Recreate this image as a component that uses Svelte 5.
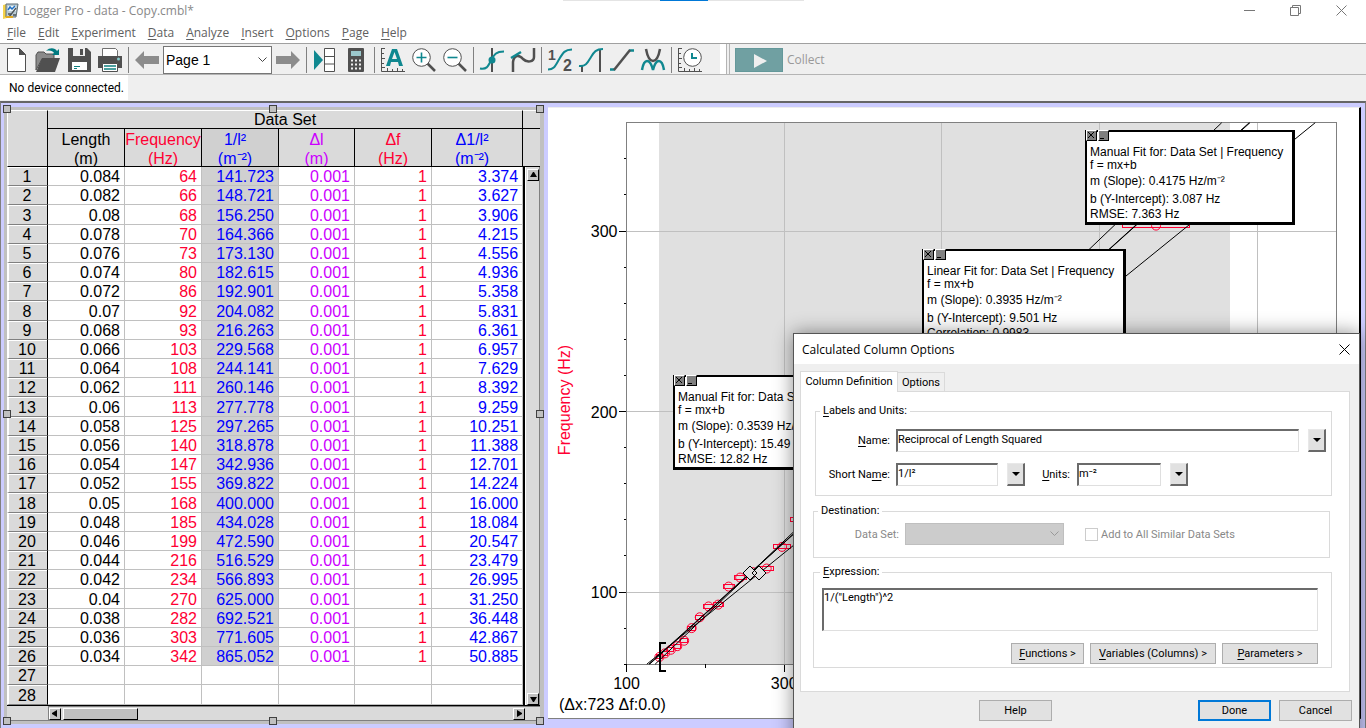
<script>
    const menus = ['File', 'Edit', 'Experiment', 'Data', 'Analyze', 'Insert', 'Options', 'Page', 'Help'];

    const columns = [
        { name: 'Length', unit: '(m)', kind: 'length' },
        { name: 'Frequency', unit: '(Hz)', kind: 'freq' },
        { name: '1/l²', unit: '(m⁻²)', kind: 'recip' },
        { name: 'Δl', unit: '(m)', kind: 'dl' },
        { name: 'Δf', unit: '(Hz)', kind: 'df' },
        { name: 'Δ1/l²', unit: '(m⁻²)', kind: 'drecip' }
    ];

    // length, frequency, 1/l², error of 1/l²
    const data = [
        ['0.084', 64, '141.723', '3.374'],
        ['0.082', 66, '148.721', '3.627'],
        ['0.08', 68, '156.250', '3.906'],
        ['0.078', 70, '164.366', '4.215'],
        ['0.076', 73, '173.130', '4.556'],
        ['0.074', 80, '182.615', '4.936'],
        ['0.072', 86, '192.901', '5.358'],
        ['0.07', 92, '204.082', '5.831'],
        ['0.068', 93, '216.263', '6.361'],
        ['0.066', 103, '229.568', '6.957'],
        ['0.064', 108, '244.141', '7.629'],
        ['0.062', 111, '260.146', '8.392'],
        ['0.06', 113, '277.778', '9.259'],
        ['0.058', 125, '297.265', '10.251'],
        ['0.056', 140, '318.878', '11.388'],
        ['0.054', 147, '342.936', '12.701'],
        ['0.052', 155, '369.822', '14.224'],
        ['0.05', 168, '400.000', '16.000'],
        ['0.048', 185, '434.028', '18.084'],
        ['0.046', 199, '472.590', '20.547'],
        ['0.044', 216, '516.529', '23.479'],
        ['0.042', 234, '566.893', '26.995'],
        ['0.04', 270, '625.000', '31.250'],
        ['0.038', 282, '692.521', '36.448'],
        ['0.036', 303, '771.605', '42.867'],
        ['0.034', 342, '865.052', '50.885']
    ];
    const rows = data.map(([l, f, r, dr]) => [l, f, r, '0.001', '1', dr]);
    while (rows.length < 28) rows.push(['', '', '', '', '', '']);

    // plot scales
    const px = (x) => 78.5 + (x - 100) * 0.7885;
    const py = (y) => 484 - (y - 100) * 1.805;
    const xGrid = [300, 500, 700, 900];
    const yGrid = [100, 200, 300];
    const yTicks = [60, 80, 120, 140, 160, 180, 220, 240, 260, 280, 320, 340];

    const points = data.map(([l, f, r, dr]) => ({
        x: px(+r),
        y: py(f),
        w: dr * 0.7885
    }));

    const lines = [
        [0.4175, 3.087],
        [0.3935, 9.501],
        [0.3945, 9],
        [0.3539, 15.49]
    ].map(([m, b]) => ({
        x1: px((60 - b) / m),
        y1: py(60),
        x2: px((360 - b) / m),
        y2: py(360)
    }));

    const fits = [
        { id: 'low', title: 'Manual Fit for: Data Set | Frequency', m: '0.3539', b: '15.49', last: 'RMSE: 12.82 Hz' },
        { id: 'mid', title: 'Linear Fit for: Data Set | Frequency', m: '0.3935', b: '9.501', last: 'Correlation: 0.9983' },
        { id: 'high', title: 'Manual Fit for: Data Set | Frequency', m: '0.4175', b: '3.087', last: 'RMSE: 7.363 Hz' }
    ];

    let name = 'Reciprocal of Length Squared';
    let shortName = '1/l²';
    let units = 'm⁻²';
    let expression = '1/("Length")^2';
</script>

<div class="app">
    <header class="titlebar">
        <svg class="logo" width="16" height="16" viewBox="0 0 16 16">
            <path d="M0 2l4-1v14l-4 1z" fill="#f5d34b" />
            <path d="M3 1h12l-2 13H3z" fill="#b9cbd3" stroke="#5c6b73" />
            <path d="M5 3h8v5H5z" fill="#eef6fb" />
            <path d="M5 7l2-3 2 2 3-3" fill="none" stroke="#1f6fc2" stroke-width="1.5" />
            <path d="M6 14l7-9M5 11h4M10 12h3" stroke="#4d5459" stroke-width="1.3" />
            <path d="M3 14h7" stroke="#e1a922" stroke-width="2" />
        </svg>
        <span>Logger Pro - data - Copy.cmbl*</span>
        <div class="notch"><i></i></div>
        <div class="controls">
            <button aria-label="Minimize"><svg width="11" height="11"><path d="M0 5.5h11" /></svg></button>
            <button aria-label="Restore"><svg width="11" height="11"><path d="M.5 2.5h8v8h-8zM2.5 2.5v-2h8v8h-2" /></svg></button>
            <button aria-label="Close"><svg width="11" height="11"><path d="M.5.5l10 10M10.500.5l-10 10" /></svg></button>
        </div>
    </header>

    <nav class="menubar">
        {#each menus as menu}
            <button><u>{menu[0]}</u>{menu.slice(1)}</button>
        {/each}
    </nav>

    <div class="toolbar">
        <div class="tools">
            <button aria-label="New"><svg viewBox="0 0 24 24"><path d="M2.500.5h12l6 6v17h-18z" fill="#fff" stroke="#505050" /><path d="M14 0v7h7z" fill="#505050" /></svg></button>
            <button aria-label="Open"><svg viewBox="0 0 24 24"><path d="M0 22V7l2-3h6l2 2h8v5H6z" fill="#8a8a8a" stroke="#505050" /><path d="M6 10h18l-5 14H0z" fill="#505050" /><path d="M10 3c4-4 9-3 11 0l2-2v6h-7l2-2c-1-2-4-3-8-2z" fill="#007a80" /></svg></button>
            <button aria-label="Save"><svg viewBox="0 0 24 24"><path d="M1 0h19l4 4v20H1z" fill="#505050" /><path d="M6 0h12v8H6z" fill="#efefef" /><path d="M13 1h3v6h-3z" fill="#505050" /><path d="M5 14h15v8H5z" fill="#fff" /><path d="M7 18.500h6M7 20.500h3" stroke="#108080" /></svg></button>
            <button aria-label="Print"><svg viewBox="0 0 24 24"><path d="M4.500.5h13l2 2v6h-15z" fill="#fff" stroke="#707070" /><path d="M0 8h24v12H0z" fill="#505050" /><circle cx="20.500" cy="11" r="1.500" fill="#8cc" /><path d="M4.500 15.500h15v8h-15z" fill="#fff" stroke="#505050" /><path d="M6 18h12M6 21h12" stroke="#108080" stroke-width="1.500" /></svg></button>
            <i class="sep"></i>
            <button aria-label="Previous page"><svg viewBox="0 0 24 24"><path d="M0 12l9-9v5h15v8H9v5z" fill="#8c8c8c" /></svg></button>
            <select aria-label="Page"><option>Page 1</option></select>
            <button aria-label="Next page"><svg viewBox="0 0 24 24"><path d="M24 12l-9-9v5H0v8h15v5z" fill="#8c8c8c" /></svg></button>
            <i class="sep"></i>
            <button aria-label="Data browser"><svg viewBox="0 0 24 24"><path d="M1 2l9 10-9 10z" fill="#108890" /><path d="M11.500.5h10v23h-10zM11 8.500h11M11 16h11" fill="#fff" stroke="#505050" /></svg></button>
            <button aria-label="Calculator"><svg viewBox="0 0 24 24"><rect x="4" width="16" height="24" rx="1" fill="#505050" /><path d="M7 3h10v5H7z" fill="#9cc8cc" /><path d="M7 12.500h11M7 16.500h11M7 20.500h11" stroke="#efefef" stroke-width="2" stroke-dasharray="2 2" /></svg></button>
            <i class="sep"></i>
            <button aria-label="Autoscale"><svg viewBox="0 0 24 24"><path d="M.5 0v23.500H24M0 .5h4M0 5.500h3M0 10.500h4M0 15.500h3M0 19.500h4M6.500 23v-3M11.500 23v-2M16.500 23v-3M21.500 23v-2" fill="none" stroke="#505050" /><path d="M5 18L11 1h5l6 17h-4l-1-4h-7l-1 4zM11 11h5l-2.500-7z" fill="#108890" fill-rule="evenodd" /></svg></button>
            <button aria-label="Zoom in"><svg viewBox="0 0 24 24"><path d="M15 15l8 8" stroke="#505050" stroke-width="2.500" /><circle cx="9.500" cy="9.500" r="8.800" fill="#fff" stroke="#505050" /><path d="M4.500 9.500h10M9.500 4.500v10" stroke="#108890" stroke-width="1.600" /></svg></button>
            <button aria-label="Zoom out"><svg viewBox="0 0 24 24"><path d="M15 15l8 8" stroke="#505050" stroke-width="2.500" /><circle cx="9.500" cy="9.500" r="8.800" fill="#fff" stroke="#505050" /><path d="M4.500 9.500h10" stroke="#108890" stroke-width="1.600" /></svg></button>
            <i class="sep"></i>
            <button aria-label="Examine"><svg viewBox="0 0 24 24"><path d="M12 0v24" stroke="#505050" stroke-width="2" /><path d="M0 20.500c7 1 8-2 11-8s5-9 13-9" fill="none" stroke="#108890" stroke-width="2" /><circle cx="12" cy="12" r="3.500" fill="#108890" /></svg></button>
            <button aria-label="Tangent"><svg viewBox="0 0 24 24"><path d="M2 24V14c1-8 7-7 10-3 4 4 11 3 11-2V0" fill="none" stroke="#505050" stroke-width="2.500" /><path d="M0 10l10-6" stroke="#108890" stroke-width="2.500" /></svg></button>
            <i class="sep"></i>
            <button aria-label="Statistics"><svg viewBox="0 0 24 24"><path d="M0 21.500c6 0 7-3 11-10s6-10 13-10" fill="none" stroke="#108890" stroke-width="2" /><text x="0" y="12" font-size="14">1</text><text x="15" y="23" font-size="16">2</text></svg></button>
            <button aria-label="Integral"><svg viewBox="0 0 24 24"><path d="M3 18v6M21 1v23" stroke="#505050" stroke-width="2" /><path d="M0 18c7 1 9-4 12-9s5-8 12-8" fill="none" stroke="#108890" stroke-width="2" /></svg></button>
            <button aria-label="Linear fit"><svg viewBox="0 0 24 24"><path d="M0 21.500h5M19 2.500h5" stroke="#108890" stroke-width="2.500" /><path d="M4 22L20 2" stroke="#505050" stroke-width="2.500" /></svg></button>
            <button aria-label="Curve fit"><svg viewBox="0 0 24 24"><path d="M1 22c2-12 8-12 11 0 3-12 9-12 11 0" fill="none" stroke="#108890" stroke-width="2.500" /><path d="M5 1c3 16 11 16 14 0" fill="none" stroke="#505050" stroke-width="2.500" /></svg></button>
            <i class="sep"></i>
            <button aria-label="Data collection"><svg viewBox="0 0 24 24"><path d="M.5 0v23.500H24M0 .5h4M0 5.500h3M0 10.500h4M0 15.500h3M0 19.500h4M6.500 23v-3M11.500 23v-2M16.500 23v-3M21.500 23v-2" fill="none" stroke="#505050" /><circle cx="14.500" cy="9.500" r="8.800" fill="#fff" stroke="#505050" /><path d="M14 5v5h5" fill="none" stroke="#108890" stroke-width="2" /></svg></button>
        </div>
        <button class="collect" disabled>
            <svg width="48" height="24"><path d="M18 5l13 7-13 7z" fill="#efefef" /></svg>
            Collect
        </button>
    </div>

    <div class="status"><span>No device connected.</span></div>

    <main class="workspace">
        <section class="table-pane">
            <div class="table-top">
                <table>
                    <colgroup>
                        <col class="c-num" />
                        {#each columns as col}<col class="c-{col.kind}" />{/each}
                    </colgroup>
                    <thead>
                        <tr class="set"><th rowspan="2"></th><th colspan="6">Data Set</th></tr>
                        <tr class="names">
                            {#each columns as col}
                                <th class={col.kind}><span>{col.name}<br />{col.unit}</span></th>
                            {/each}
                        </tr>
                    </thead>
                    <tbody>
                        {#each rows as row, i}
                            <tr>
                                <th>{i + 1}</th>
                                {#each row as cell, j}
                                    <td class={columns[j].kind} class:filled={cell !== ''}>{cell}</td>
                                {/each}
                            </tr>
                        {/each}
                    </tbody>
                </table>
                <div class="vscroll">
                    <div class="corner"></div>
                    <div class="track">
                        <button aria-label="Scroll up"><svg width="7" height="6"><path d="M3 0h1l3 5H0z" /></svg></button>
                        <button aria-label="Scroll down"><svg width="7" height="6"><path d="M0 1h7L4 6H3z" /></svg></button>
                    </div>
                </div>
            </div>
            <div class="hscroll">
                <div class="track">
                    <button aria-label="Scroll left"><svg width="6" height="7"><path d="M5 0v7L0 4V3z" /></svg></button>
                    <div class="thumb"></div>
                    <button aria-label="Scroll right"><svg width="6" height="7"><path d="M1 0v7l5-3V3z" /></svg></button>
                </div>
            </div>
            <i class="handle t l"></i><i class="handle t c"></i><i class="handle t r"></i>
            <i class="handle m l"></i><i class="handle m r"></i>
            <i class="handle b l"></i><i class="handle b c"></i><i class="handle b r"></i>
        </section>

        <section class="graph-pane">
            <svg class="plot" width="100%" height="610" shape-rendering="crispEdges">
                <rect x={px(141.7)} y={py(360)} width={px(865) - px(141.7)} height={py(60) - py(360)} fill="#e0e0e0" />
                {#each xGrid as x}
                    <line x1={px(x)} x2={px(x)} y1={py(360)} y2={py(60)} stroke="#c0c0c0" />
                    <line x1={px(x)} x2={px(x)} y1={py(60)} y2={py(60) + 8} stroke="#000" />
                {/each}
                {#each yGrid as y}
                    <line x1={px(100)} x2={px(1000)} y1={py(y)} y2={py(y)} stroke="#c0c0c0" />
                    <line x1={px(100) - 8} x2={px(100)} y1={py(y)} y2={py(y)} stroke="#000" />
                    <text x={px(100) - 9} y={py(y) + 6} text-anchor="end">{y}</text>
                {/each}
                {#each yTicks as y}
                    <line x1={px(100) - 3} x2={px(100)} y1={py(y)} y2={py(y)} stroke="#000" />
                {/each}
                <rect x={px(100)} y={py(360)} width={px(1000) - px(100)} height={py(60) - py(360)} fill="none" stroke="#808080" />
                <line x1={px(100)} x2={px(100)} y1={py(60)} y2={py(60) + 8} stroke="#000" />
                <line x1={px(200)} x2={px(200)} y1={py(60)} y2={py(60) + 4} stroke="#000" />
                <text x={px(100)} y="581" text-anchor="middle">100</text>
                <text x={px(300)} y="581" text-anchor="middle">300</text>
                <text x="11" y="602">(Δx:723 Δf:0.0)</text>
                <text class="axis" x="-292" y="22" text-anchor="middle" transform="rotate(-90)">Frequency (Hz)</text>
                {#each points as p}
                    <rect x={p.x - p.w} y={p.y - 2} width={2 * p.w} height="4" fill="none" stroke="#f03" />
                    <circle cx={p.x} cy={p.y} r="4.500" fill="none" stroke="#f03" shape-rendering="auto" />
                {/each}
                {#each lines as l}
                    <line {...l} stroke="#000" shape-rendering="auto" />
                {/each}
                <path d="M195 465l7-7 7 7-7 7zM204 465l7-7 7 7-7 7z" fill="#e0e0e0" stroke="#000" shape-rendering="auto" />
                <path d="M118 535h-6v28h6" fill="none" stroke="#000" stroke-width="2" />
            </svg>

            {#each fits as fit}
                <div class="fit {fit.id}">
                    <div class="fit-buttons">
                        <button aria-label="Close fit"><svg width="9" height="9"><path d="M1 1l6 6M7 1l-6 6" /></svg></button>
                        <button aria-label="Collapse fit"><svg width="9" height="9"><path d="M1 7.500h4" /></svg></button>
                    </div>
                    <p>{fit.title}</p>
                    <p>f = mx+b</p>
                    <p class="tall">m (Slope): {fit.m} Hz/m⁻²</p>
                    <p class="tall">b (Y-Intercept): {fit.b} Hz</p>
                    <p>{fit.last}</p>
                </div>
            {/each}
        </section>
    </main>

    <div class="dialog" role="dialog" aria-labelledby="dialog-title">
        <div class="dialog-title">
            <span id="dialog-title">Calculated Column Options</span>
            <button aria-label="Close dialog"><svg width="11" height="11"><path d="M.5.5l10 10M10.500.5l-10 10" /></svg></button>
        </div>
        <div class="tabs" role="tablist">
            <button role="tab" aria-selected="true" class="active">Column Definition</button>
            <button role="tab" aria-selected="false">Options</button>
        </div>
        <div class="panel">
            <fieldset class="labels">
                <legend><u>L</u>abels and Units:</legend>
                <div class="row">
                    <label class="lead" for="name"><u>N</u>ame:</label>
                    <input id="name" class="wide" bind:value={name} />
                    <button class="drop" aria-label="Name choices"><svg width="8" height="4"><path d="M0 0h8L4 4z" /></svg></button>
                </div>
                <div class="row">
                    <label class="lead" for="short">Short Na<u>m</u>e:</label>
                    <input id="short" class="short" bind:value={shortName} />
                    <button class="drop" aria-label="Short name symbols"><svg width="8" height="4"><path d="M0 0h8L4 4z" /></svg></button>
                    <label class="units" for="units"><u>U</u>nits:</label>
                    <input id="units" class="unit" bind:value={units} />
                    <button class="drop" aria-label="Unit symbols"><svg width="8" height="4"><path d="M0 0h8L4 4z" /></svg></button>
                </div>
            </fieldset>
            <fieldset class="destination" disabled>
                <legend>Destination:</legend>
                <div class="row">
                    <label class="lead" for="set">Data Set:</label>
                    <select id="set"></select>
                    <input id="all" type="checkbox" />
                    <label for="all">Add to All Similar Data Sets</label>
                </div>
            </fieldset>
            <fieldset class="expression">
                <legend><label for="expr"><u>E</u>xpression:</label></legend>
                <textarea id="expr" bind:value={expression}></textarea>
                <div class="insert">
                    <button class="push"><u>F</u>unctions &gt;</button>
                    <button class="push variables"><u>V</u>ariables (Columns) &gt;</button>
                    <button class="push parameters"><u>P</u>arameters &gt;</button>
                </div>
            </fieldset>
        </div>
        <div class="actions">
            <button class="push help">Help</button>
            <button class="push done">Done</button>
            <button class="push">Cancel</button>
        </div>
    </div>
</div>

<style>
    :global(body) {
        overflow: hidden;
    }

    .app {
        position: relative;
        display: flex;
        flex-direction: column;
        height: 100vh;
        overflow: hidden;
        background: #fff;
        font-family: "Open Sans", "Noto Sans", sans-serif;
        font-size: 12px;
        color: #000;
    }

    .app *,
    .app *::before {
        box-sizing: border-box;
    }

    button {
        padding: 0;
        border: 0;
        background: none;
        font: inherit;
        color: inherit;
    }

    svg {
        display: block;
    }

    u {
        text-underline-offset: 2px;
    }

    /* title and menus */
    .titlebar {
        position: relative;
        display: flex;
        align-items: center;
        gap: 4px;
        height: 22px;
        padding-left: 3px;
        color: #888;
    }

    .notch {
        position: absolute;
        top: 0;
        left: 50%;
        width: 241px;
        height: 1px;
        margin-left: -120px;
        background: #e4e4e4;
    }

    .notch i {
        display: block;
        width: 48px;
        height: 1px;
        margin: 0 auto;
        background: #0078d7;
    }

    .controls {
        display: flex;
        gap: 35px;
        margin-left: auto;
        padding-right: 19px;
    }

    .controls path {
        fill: none;
        stroke: #777;
    }

    .menubar {
        display: flex;
        gap: 12px;
        height: 22px;
        padding-left: 7px;
        border-bottom: 1px solid #a0a0a0;
        color: #606060;
    }

    /* toolbar */
    .toolbar {
        display: flex;
        height: 32px;
        border-bottom: 1px solid #b4b4b4;
        background: #efefef;
    }

    .tools {
        display: flex;
        align-items: center;
        padding: 2px 18px 0 5px;
        border-right: 6px solid #fff;
    }

    .tools button {
        width: 24px;
        height: 24px;
        margin-right: 7px;
    }

    .tools button:last-child {
        margin-right: 0;
    }

    .tools svg {
        width: 24px;
        height: 24px;
        overflow: visible;
    }

    .tools text {
        font-family: "Liberation Sans", Arial, sans-serif;
        font-weight: 700;
        fill: #505050;
    }

    .sep {
        width: 1px;
        height: 26px;
        margin: 0 6px 0 -1px;
        background: #808080;
    }

    .tools select {
        width: 109px;
        height: 28px;
        margin: 0 4px 0 -3px;
        padding: 0 2px;
        border: 1px solid #767676;
        border-radius: 0;
        appearance: none;
        background: #fff url("data:image/svg+xml,%3Csvg xmlns='http://www.w3.org/2000/svg' width='9' height='6'%3E%3Cpath d='M.5.5l4 4 4-4' fill='none' stroke='%23444'/%3E%3C/svg%3E") no-repeat right 4px center;
        font: 14px "Liberation Sans", Arial, sans-serif;
        color: #000;
    }

    .collect {
        display: flex;
        align-items: center;
        gap: 4px;
        padding: 2px 0 0 5px;
        border-left: 4px double #b4b4b4;
        color: #999;
    }

    .collect svg {
        border: 1px solid #64989a;
        background: #70a0a2;
    }

    .status {
        height: 26px;
        background: #efefef;
    }

    .status span {
        display: inline-block;
        width: 128px;
        height: 25px;
        padding-left: 9px;
        background: #fff;
        font-family: Roboto, sans-serif;
        line-height: 26px;
        white-space: nowrap;
    }

    /* workspace */
    .workspace {
        display: flex;
        flex: 1;
        gap: 4px;
        padding: 4px 4px 4px 3px;
        border: 1px solid #808080;
        border-top: 2px solid #666;
        border-bottom: 0;
        background: #ccf;
        font-family: "Liberation Sans", Arial, sans-serif;
    }

    .table-pane {
        position: relative;
        align-self: flex-start;
        padding: 3px 4px 3px 3px;
        background: #c0c0c0;
        font-size: 16px;
    }

    .table-top {
        display: flex;
        border-bottom: 1px solid #000;
    }

    table {
        width: 516px;
        table-layout: fixed;
        border-collapse: separate;
        border-spacing: 0;
        line-height: 16px;
    }

    .c-num { width: 41px; }
    .c-length, .c-freq, .c-recip, .c-df { width: 77px; }
    .c-dl { width: 76px; }
    .c-drecip { width: 91px; }

    th, td {
        padding: 2px 0 0;
        font-weight: 400;
    }

    thead th {
        padding: 0;
        border-right: 1px solid #000;
        border-bottom: 1px solid #000;
        background: #dadada;
        overflow: hidden;
    }

    .set th {
        height: 19px;
        border-top: 1px solid #fff;
        line-height: 17px;
    }

    .set th[rowspan] {
        border-left: 1px solid #fff;
    }

    .names th {
        height: 38px;
        line-height: 19px;
    }

    .names span {
        display: block;
        height: 37px;
        padding-top: 1px;
    }

    .names .recip, .names .drecip {
        padding-right: 10px;
    }

    .names .recip {
        background: #d0d0d0;
    }

    tbody tr {
        height: 19px;
    }

    tbody tr:nth-child(5n + 3) {
        height: 20px;
    }

    tbody th {
        padding-right: 2px;
        border-left: 2px solid #fff;
        border-right: 1px solid #000;
        border-bottom: 1px solid #808080;
        background: #dadada;
        box-shadow: inset 0 1px #fff;
    }

    td {
        padding-right: 4px;
        border-right: 1px solid #c0c0c0;
        border-bottom: 1px solid #c0c0c0;
        background: #fff;
        text-align: right;
    }

    td.recip.filled {
        background: #d0d0d0;
    }

    .freq, .df { color: #f03; }
    .recip, .drecip { color: #00f; }
    .dl { color: #c0f; }

    .vscroll {
        display: flex;
        flex-direction: column;
        width: 17px;
    }

    .corner {
        height: 57px;
        border-top: 1px solid #fff;
        border-bottom: 1px solid #000;
        background: linear-gradient(#000, #000) 0 17px / 100% 1px no-repeat #dadada;
    }

    .vscroll .track {
        display: flex;
        flex: 1;
        flex-direction: column;
        justify-content: space-between;
        padding: 2px 0 0 2px;
        border-left: 2px solid #000;
        border-right: 1px solid #808080;
        background: #dadada;
        box-shadow: inset 1px 0 #fff;
    }

    .track button {
        display: flex;
        align-items: center;
        justify-content: center;
        width: 12px;
        height: 12px;
        border: 1px solid #fff;
        border-right-color: #000;
        border-bottom-color: #000;
        background: #c0c0c0;
    }

    .hscroll {
        height: 15px;
        padding-left: 41px;
        border-bottom: 1px solid #808080;
        background: #dadada;
    }

    .hscroll .track {
        display: flex;
        align-items: center;
        gap: 2px;
        height: 14px;
        padding: 0 15px 0 0;
        border-top: 1px solid #808080;
        border-left: 1px solid #808080;
    }

    .thumb {
        width: 75px;
        height: 12px;
        margin-right: auto;
        border: 1px solid #fff;
        border-right-color: #000;
        border-bottom-color: #000;
        background: #c0c0c0;
    }

    .handle {
        position: absolute;
        width: 8px;
        height: 8px;
        border: 1px solid #404040;
        background: #c0c0c0;
    }

    .handle.t { top: -2px; }
    .handle.m { top: 303px; }
    .handle.b { bottom: -1px; }
    .handle.l { left: -1px; }
    .handle.c { left: 265px; }
    .handle.r { right: 0; }

    /* graph */
    .graph-pane {
        position: relative;
        flex: 1;
        align-self: flex-start;
        border-top: 1px solid #eee;
        border-right: 2px solid #000;
        border-bottom: 1px solid #808080;
        background: #fff;
    }

    .plot text {
        font-size: 16px;
    }

    .plot .axis {
        fill: #f03;
    }

    .fit {
        position: absolute;
        width: 210px;
        padding: 14px 3px 1px;
        border: 1px solid #000;
        border-width: 2px 3px 3px 2px;
        background: #fff;
        font-size: 12px;
        line-height: 13px;
        white-space: nowrap;
    }

    .fit p {
        margin: 0;
    }

    .fit .tall {
        line-height: 18px;
    }

    .fit.low { left: 125px; top: 267px; }
    .fit.mid { left: 374px; top: 141px; width: 204px; }
    .fit.high { left: 537px; top: 22px; }

    .fit-buttons {
        position: absolute;
        top: -2px;
        left: -1px;
        display: flex;
        gap: 1px;
    }

    .fit-buttons button {
        width: 11px;
        height: 11px;
        border: 1px solid #fff;
        border-right-color: #000;
        border-bottom-color: #000;
        background: #808080;
    }

    .fit-buttons path {
        fill: none;
        stroke: #000;
    }

    /* dialog */
    .dialog {
        position: absolute;
        top: 333px;
        right: 6px;
        width: 567px;
        height: 420px;
        border: 1px solid #555;
        background: #efefef;
        box-shadow: 0 0 18px rgba(0, 0, 0, 0.45);
        font-family: Roboto, sans-serif;
        font-size: 11px;
    }

    .dialog-title {
        display: flex;
        align-items: center;
        justify-content: space-between;
        height: 30px;
        padding: 0 9px 0 8px;
        background: #fff;
        font-family: "Open Sans", "Noto Sans", sans-serif;
        font-size: 12px;
    }

    .dialog-title path {
        stroke: #000;
    }

    .tabs {
        display: flex;
        align-items: flex-end;
        height: 27px;
        padding-left: 6px;
    }

    .tabs button {
        height: 19px;
        padding: 0 4px;
        border: 1px solid #dadada;
        border-left: 0;
        border-bottom: 0;
    }

    .tabs .active {
        position: relative;
        height: 21px;
        width: 98px;
        margin-bottom: -1px;
        padding-bottom: 2px;
        border-left: 1px solid #dadada;
        background: #fff;
        white-space: nowrap;
    }

    .panel {
        margin: 0 9px 0 6px;
        padding: 12px 17px 23px 12px;
        border: 1px solid #dadada;
        background: #fff;
    }

    fieldset {
        min-width: 0;
        margin: 0 0 7px;
        border: 1px solid #dadada;
    }

    legend {
        height: 14px;
        margin-left: 4px;
        padding: 0 3px;
        line-height: 14px;
    }

    .labels {
        margin: 0 0 8px 2px;
        padding: 11px 5px 9px 0;
    }

    .destination {
        margin-right: 2px;
        padding: 5px 0 12px;
    }

    .expression {
        margin-bottom: 0;
        padding: 9px 13px 3px 8px;
    }

    .expression legend {
        margin-left: -2px;
    }

    .row {
        display: flex;
        align-items: center;
    }

    .labels .row + .row {
        margin-top: 11px;
    }

    .lead {
        width: 74px;
        margin-right: 6px;
        text-align: right;
    }

    .destination .lead {
        width: 85px;
    }

    .destination label {
        color: #888;
    }

    input, textarea {
        height: 23px;
        padding: 0 0 4px;
        border: 1px solid #dfdfdf;
        border-top: 2px solid #6b6b6b;
        border-left: 2px solid #6b6b6b;
        border-radius: 0;
        outline: 0;
        font: inherit;
        color: #000;
    }

    .wide {
        flex: 1;
        min-width: 0;
    }

    .short {
        width: 102px;
    }

    .unit {
        width: 84px;
    }

    .drop {
        display: flex;
        align-items: center;
        justify-content: center;
        width: 18px;
        height: 23px;
        margin-left: 9px;
        border: 1px solid #e8e8e8;
        border-right: 2px solid #696969;
        border-bottom: 2px solid #696969;
        background: #e1e1e1;
    }

    .units {
        width: 45px;
        margin-right: 7px;
        text-align: right;
    }

    .destination select {
        width: 159px;
        height: 22px;
        border: 1px solid #bfbfbf;
        border-radius: 0;
        appearance: none;
        background: #ccc url("data:image/svg+xml,%3Csvg xmlns='http://www.w3.org/2000/svg' width='9' height='6'%3E%3Cpath d='M.5.5l4 4 4-4' fill='none' stroke='%23999'/%3E%3C/svg%3E") no-repeat right 4px center;
        opacity: 1;
    }

    .destination input {
        width: 13px;
        height: 13px;
        margin: 0 3px 0 21px;
        padding: 0;
        border: 1px solid #ccc;
        appearance: none;
        background: #fff;
    }

    textarea {
        display: block;
        width: 100%;
        height: 43px;
        padding-top: 1px;
        resize: none;
    }

    .insert {
        display: flex;
        justify-content: flex-end;
        gap: 6px;
        margin-top: 12px;
    }

    .push {
        width: 73px;
        height: 21px;
        border: 1px solid #adadad;
        background: #e1e1e1;
        white-space: nowrap;
    }

    .variables {
        width: 126px;
    }

    .parameters {
        width: 96px;
    }

    .actions {
        display: flex;
        gap: 8px;
        padding: 8px 7px 0 0;
    }

    .help {
        margin: 0 auto 0 185px;
    }

    .done {
        border: 2px solid #0078d7;
    }
</style>
